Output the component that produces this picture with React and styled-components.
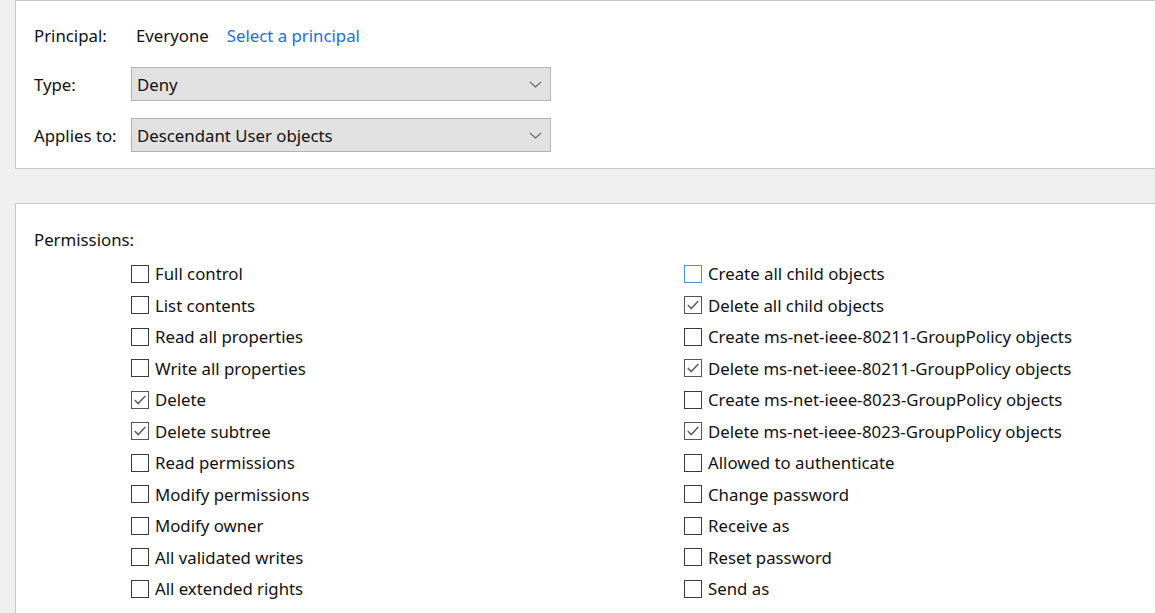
import styled, { createGlobalStyle } from "styled-components";

const GlobalStyle = createGlobalStyle`
  html, body {
    margin: 0;
    padding: 0;
    background: #f0f0f0;
    overflow: hidden;
  }
  body {
    font-family: "Noto Sans", "Open Sans", "Liberation Sans", sans-serif;
    font-size: 16.8px;
    color: #111;
  }
`;

const leftPermissions = [
  { label: "Full control" },
  { label: "List contents" },
  { label: "Read all properties" },
  { label: "Write all properties" },
  { label: "Delete", checked: true },
  { label: "Delete subtree", checked: true },
  { label: "Read permissions" },
  { label: "Modify permissions" },
  { label: "Modify owner" },
  { label: "All validated writes" },
  { label: "All extended rights" },
];

const rightPermissions = [
  { label: "Create all child objects", focused: true },
  { label: "Delete all child objects", checked: true },
  { label: "Create ms-net-ieee-80211-GroupPolicy objects" },
  { label: "Delete ms-net-ieee-80211-GroupPolicy objects", checked: true },
  { label: "Create ms-net-ieee-8023-GroupPolicy objects" },
  { label: "Delete ms-net-ieee-8023-GroupPolicy objects", checked: true },
  { label: "Allowed to authenticate" },
  { label: "Change password" },
  { label: "Receive as" },
  { label: "Reset password" },
  { label: "Send as" },
];

const Chevron = () => (
  <svg width="13" height="7" viewBox="0 0 13 7">
    <polyline points="0.8,0.8 6.5,6 12.2,0.8" fill="none" stroke="#606060" strokeWidth="1.1" />
  </svg>
);

const Check = () => (
  <svg width="14" height="14" viewBox="0 0 14 14">
    <polyline points="1.8,7 5.2,10.6 12.3,3" fill="none" stroke="#5e5e5e" strokeWidth="1.5" />
  </svg>
);

const Permission = ({ label, checked, focused }) => (
  <Item>
    <Box checked={checked} focused={focused}>
      {checked && <Check />}
    </Box>
    <span>{label}</span>
  </Item>
);

const App = () => {
  return (
    <>
      <GlobalStyle />
      <Page>
        <TopPanel>
          <Field>
            <Label>Principal:</Label>
            <Principal>
              Everyone <Link>Select a principal</Link>
            </Principal>
          </Field>
          <Field>
            <Label>Type:</Label>
            <Select>
              <span>Deny</span>
              <Chevron />
            </Select>
          </Field>
          <Field>
            <Label>Applies to:</Label>
            <Select>
              <span>Descendant User objects</span>
              <Chevron />
            </Select>
          </Field>
        </TopPanel>

        <BottomPanel>
          <Heading>Permissions:</Heading>
          <Columns>
            <Column>
              {leftPermissions.map((p) => (
                <Permission key={p.label} {...p} />
              ))}
            </Column>
            <Column>
              {rightPermissions.map((p) => (
                <Permission key={p.label} {...p} />
              ))}
            </Column>
          </Columns>
        </BottomPanel>
      </Page>
    </>
  );
};

const Page = styled.div`
  padding-left: 15px;
  display: flex;
  flex-direction: column;
  gap: 34px;
  height: 613px;
`;

const TopPanel = styled.section`
  background: #fff;
  border: 1px solid #c9c9c9;
  border-right: none;
  padding: 18px 0 0 18px;
  box-sizing: border-box;
  height: 169px;
  display: flex;
  flex-direction: column;
  gap: 14px;
`;

const Field = styled.div`
  display: flex;
  align-items: center;
  height: 34px;

  &:first-child {
    margin-top: -1px;
    margin-bottom: 1px;
  }
  &:nth-child(3) {
    margin-top: 3px;
  }
`;

const Label = styled.div`
  width: 97px;
  flex-shrink: 0;
`;

const Principal = styled.div`
  padding-left: 5px;
  display: flex;
  gap: 18px;
`;

const Link = styled.span`
  color: #1f6fd6;
`;

const Select = styled.div`
  width: 420px;
  height: 34px;
  box-sizing: border-box;
  background: #e1e1e1;
  border: 1px solid #b3b3b3;
  display: flex;
  align-items: center;
  justify-content: space-between;
  padding: 0 8px 0 5px;
`;

const BottomPanel = styled.section`
  flex: 1;
  background: #fff;
  border: 1px solid #c9c9c9;
  border-right: none;
  border-bottom: none;
  padding: 25px 0 0 18px;
`;

const Heading = styled.div`
  line-height: 22px;
`;

const Columns = styled.div`
  display: grid;
  grid-template-columns: 553px 1fr;
  margin-left: 97px;
  margin-top: 7px;
`;

const Column = styled.div`
  display: flex;
  flex-direction: column;
`;

const Item = styled.div`
  display: flex;
  align-items: center;
  height: 31.5px;
  gap: 6px;
  white-space: nowrap;
`;

const Box = styled.div`
  width: 18px;
  height: 18px;
  box-sizing: border-box;
  border: 1.5px solid ${(p) => (p.focused ? "#3d94e8" : p.checked ? "#555" : "#3a3a3a")};
  display: flex;
  align-items: center;
  justify-content: center;
  background: #fff;
  flex-shrink: 0;
`;

export default App;
